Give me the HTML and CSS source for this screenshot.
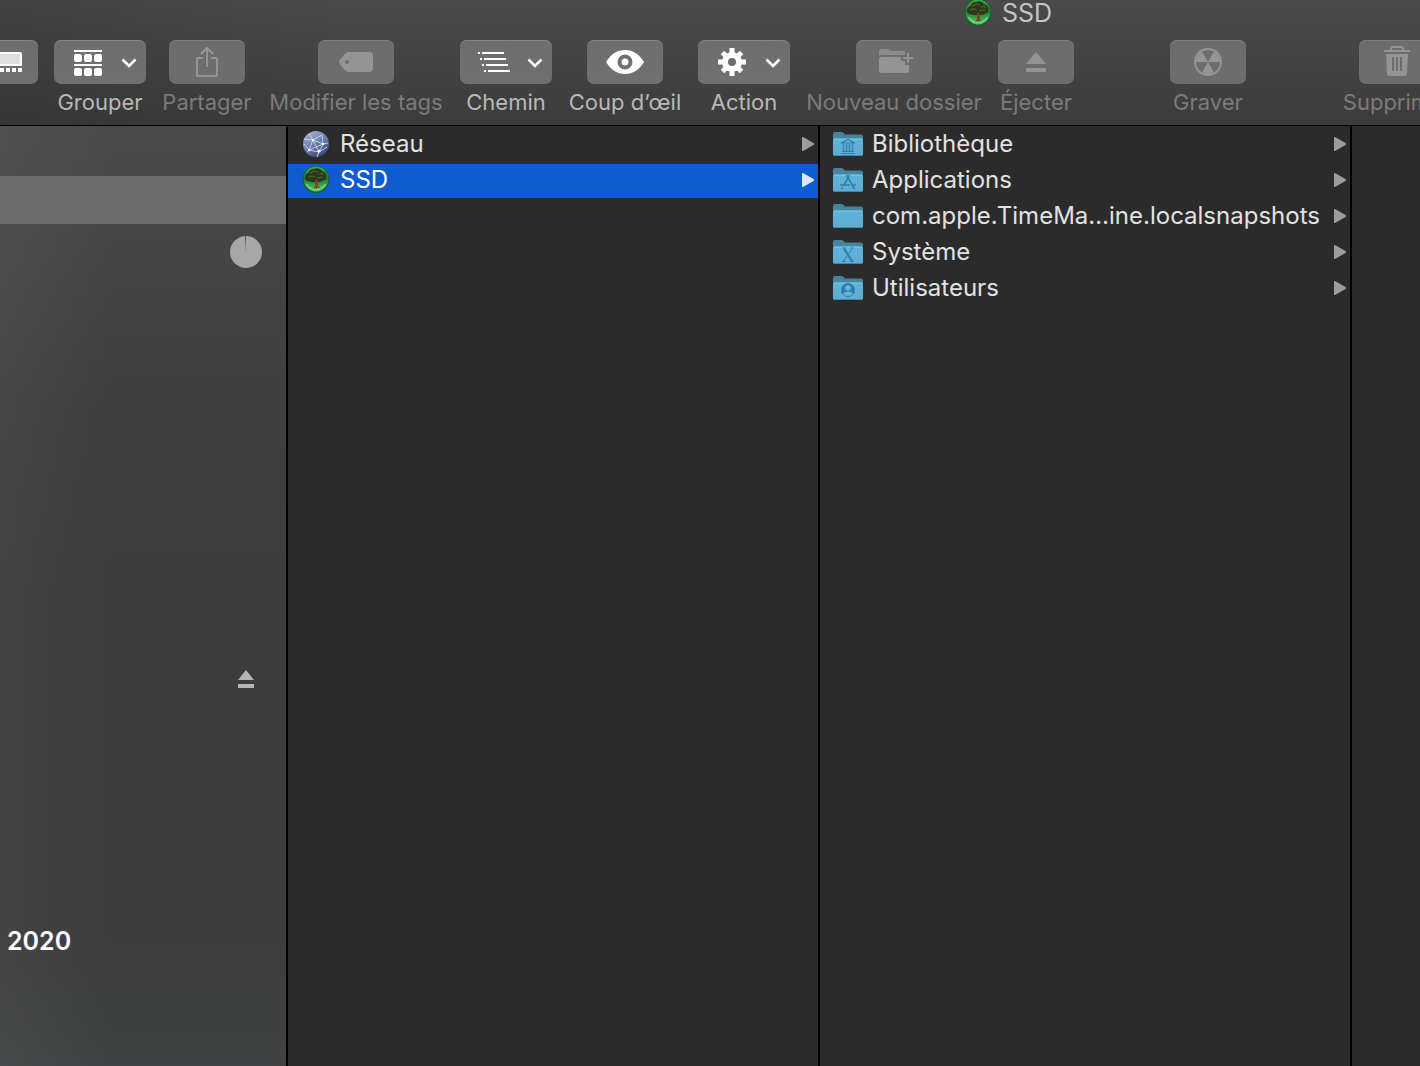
FILE: index.html
```html
<!DOCTYPE html>
<html lang="fr">
<head>
    <meta charset="UTF-8">
    <meta name="viewport" content="width=device-width, initial-scale=1.0">
    <title>SSD</title>
    <link rel="stylesheet" href="styles.css">
</head>
<body>
    <!-- shared symbols -->
    <svg class="defs" aria-hidden="true">
        <defs>
            <linearGradient id="folder-front" x1="0" y1="0" x2="0" y2="1">
                <stop offset="0" stop-color="#5cb3dc"/>
                <stop offset="1" stop-color="#62acd0"/>
            </linearGradient>
            <linearGradient id="tree-glow" x1="0" y1="0" x2="0" y2="1">
                <stop offset="0" stop-color="#2fae4c"/>
                <stop offset="0.5" stop-color="#1d7a35"/>
                <stop offset="1" stop-color="#4fd06c"/>
            </linearGradient>
            <linearGradient id="globe-fill" x1="0" y1="0" x2="0.6" y2="1">
                <stop offset="0" stop-color="#b3bbd3"/>
                <stop offset="0.5" stop-color="#7486b4"/>
                <stop offset="1" stop-color="#3d4c78"/>
            </linearGradient>
            <symbol id="folder" viewBox="0 0 32 28">
                <path d="M1 25V4q0-2 2-2h6q1.500 0 2.500 1l1.500 1.500h16q2 0 2 2V25z" fill="#45849f"/>
                <path d="M1 8h30v1H1z" fill="#31617b"/>
                <path d="M1 9.500q0-1 1-1h28q1 0 1 1V24q0 2-2 2H3q-2 0-2-2z" fill="url(#folder-front)"/>
                <path d="M2 9h28" stroke="#8accE8" stroke-width="1"/>
                <path d="M2 25.500h28" stroke="#3f86ac" stroke-width="1"/>
            </symbol>
            <symbol id="tree" viewBox="0 0 28 28">
                <circle cx="14" cy="13.500" r="13.500" fill="#1c5c2c"/>
                <circle cx="14" cy="13" r="12.500" fill="url(#tree-glow)"/>
                <path d="M4.500 18a11 11 0 0 0 19 0" fill="none" stroke="#7df08e" stroke-width="1.500" opacity="0.7"/>
                <path d="M3 12q0-4 3.500-5 1-4 5.500-4 5-2 8 2 4.500 1 4.500 5.500 0 3.500-3.500 4-3 2.500-7 1-3 1.500-6 0-4 .500-5-3.500z" fill="#2a371c"/>
                <path d="M8 7l4-2 4 1M17 8l3-1 2 2M6 11l4-1 3 1M15 12l4-1 2 1" fill="none" stroke="#4b5a28" stroke-width="1.500"/>
                <path d="M13 14h2.500l.5 6 3 2.500-4-1v2l-1.500-1.500-3 1 2.500-3z" fill="#83402a"/>
            </symbol>
            <symbol id="chevron" viewBox="0 0 16 10">
                <path d="M1.500 1.500l6.500 6.500 6.500-6.500" fill="none" stroke="currentColor" stroke-width="2.600"/>
            </symbol>
            <symbol id="eject" viewBox="0 0 20 20">
                <path d="M10 0l10 12H0zM0 16h20v4H0z" fill="currentColor"/>
            </symbol>
            <symbol id="arrow" viewBox="0 0 12 14">
                <path d="M0 1q0-1.500 1.500-.7l10 5.700q1 1 0 2l-10 5.700Q0 14.500 0 13z" fill="currentColor"/>
            </symbol>
        </defs>
    </svg>

    <div class="window">
        <header class="header">
            <div class="title">
                <svg class="title-icon"><use href="#tree"/></svg>
                <h1>SSD</h1>
            </div>

            <div class="toolbar">
                <div class="tool">
                    <button class="tool-button cut" aria-label="Galerie">
                        <svg width="38" height="44" viewBox="0 0 38 44">
                            <path d="M-10 13h30q1 0 1 1v11H-10z" fill="#dedede" stroke="#fff" stroke-width="2"/>
                            <path d="M0 28h4v4H0zM6 28h4v4H6zM12 28h4v4h-4zM18 28h4v4h-4z" fill="#fff"/>
                        </svg>
                    </button>
                </div>
                <div class="tool">
                    <button class="tool-button menu" id="group">
                        <svg width="28" height="28" viewBox="0 -2 28 28" fill="#fff">
                            <path d="M0 0h28v2H0zM0 14h28v2H0z"/>
                            <rect x="0" y="4" width="8" height="8" rx="2"/>
                            <rect x="10" y="4" width="8" height="8" rx="2"/>
                            <rect x="20" y="4" width="8" height="8" rx="2"/>
                            <rect x="0" y="18" width="8" height="8" rx="2"/>
                            <rect x="10" y="18" width="8" height="8" rx="2"/>
                            <rect x="20" y="18" width="8" height="8" rx="2"/>
                        </svg>
                        <svg class="chevron"><use href="#chevron"/></svg>
                    </button>
                    <label for="group">Grouper</label>
                </div>
                <div class="tool share">
                    <button class="tool-button" id="share" disabled>
                        <svg width="22" height="30" viewBox="0 0 22 30" fill="none" stroke="currentColor" stroke-width="2">
                            <path d="M7 11H2q-1 0-1 1v16q0 1 1 1h18q1 0 1-1V12q0-1-1-1h-5M11 20V1M5 7l6-6 6 6"/>
                        </svg>
                    </button>
                    <label for="share">Partager</label>
                </div>
                <div class="tool wide">
                    <button class="tool-button" id="tags" disabled>
                        <svg width="34" height="20" viewBox="0 0 34 20">
                            <path d="M10 0h20q4 0 4 4v12q0 4-4 4H10Q7 20 4 16L.7 12Q-.5 10 .7 8L4 4Q7 0 10 0zM8 8a2 2 0 1 0 0 4 2 2 0 0 0 0-4z" fill="currentColor"/>
                        </svg>
                    </button>
                    <label for="tags">Modifier les tags</label>
                </div>
                <div class="tool">
                    <button class="tool-button menu path" id="path">
                        <svg width="32" height="20" viewBox="0 0 32 20" fill="#fff">
                            <path d="M0 0h2v2H0zM4 0h22v2H4zM2 6h2v2H2zM6 6h22v2H6zM4 12h2v2H4zM8 12h22v2H8zM6 18h2v2H6zM10 18h22v2H10z"/>
                        </svg>
                        <svg class="chevron"><use href="#chevron"/></svg>
                    </button>
                    <label for="path">Chemin</label>
                </div>
                <div class="tool medium">
                    <button class="tool-button" id="look">
                        <svg width="38" height="24" viewBox="0 0 38 24">
                            <path d="M0 12C5 4 11 0 19 0s14 4 19 12c-5 8-11 12-19 12S5 20 0 12z" fill="#fff"/>
                            <circle cx="19" cy="12" r="5.500" fill="#fff" stroke="#6f6f6f" stroke-width="4"/>
                        </svg>
                    </button>
                    <label for="look">Coup d’œil</label>
                </div>
                <div class="tool">
                    <button class="tool-button menu" id="action">
                        <svg width="28" height="28" viewBox="-14 -14 28 28">
                            <path d="M0-14V14M-14 0H14M-9.500-9.500L9.500 9.500M9.500-9.500L-9.500 9.500" stroke="#fff" stroke-width="5"/>
                            <circle r="7" fill="#6f6f6f" stroke="#fff" stroke-width="6"/>
                            <circle r="3.500" fill="#6f6f6f"/>
                        </svg>
                        <svg class="chevron"><use href="#chevron"/></svg>
                    </button>
                    <label for="action">Action</label>
                </div>
                <div class="tool wide">
                    <button class="tool-button" id="new-folder" disabled>
                        <svg width="38" height="26" viewBox="-4 0 38 26" fill="currentColor">
                            <path d="M0 7V2q0-2 2-2h7l2 2h15v4H4q-3 0-4 1z" opacity="0.8"/>
                            <path d="M0 10q0-2 2-2h20v4h4v4h4v6q0 2-2 2H2q-2 0-2-2z"/>
                            <path d="M24 8h4V4h2v4h4v2h-4v4h-2v-4h-4z"/>
                        </svg>
                    </button>
                    <label for="new-folder">Nouveau dossier</label>
                </div>
                <div class="tool">
                    <button class="tool-button" id="eject-disk" disabled>
                        <svg width="20" height="20"><use href="#eject"/></svg>
                    </button>
                    <label for="eject-disk">Éjecter</label>
                </div>
                <div class="space"></div>
                <div class="tool">
                    <button class="tool-button" id="burn" disabled>
                        <svg width="28" height="28" viewBox="-14 -14 28 28">
                            <circle r="13" fill="none" stroke="currentColor" stroke-width="2"/>
                            <path d="M0 0L-12 0A12 12 0 0 1-6-10.400zM0 0L6-10.400A12 12 0 0 1 12 0zM0 0L6 10.400A12 12 0 0 1-6 10.400z" fill="currentColor"/>
                        </svg>
                    </button>
                    <label for="burn">Graver</label>
                </div>
                <div class="space"></div>
                <div class="tool delete">
                    <button class="tool-button" id="delete" disabled>
                        <svg width="26" height="32" viewBox="0 0 26 32">
                            <path d="M7 5V3q0-2 2-2h8q2 0 2 2v2M0 5h26" fill="none" stroke="currentColor" stroke-width="2"/>
                            <path d="M2 8h22l-1 19q0 3-3 3H6q-3 0-3-3zM8 11v14h2V11zM12 11v14h2V11zM16 11v14h2V11z" fill="currentColor" fill-rule="evenodd"/>
                        </svg>
                    </button>
                    <label for="delete">Supprimer</label>
                </div>
            </div>
        </header>

        <main class="content">
            <aside class="sidebar">
                <div class="side-row selected"></div>
                <div class="side-row">
                    <svg class="pie" viewBox="0 0 32 32">
                        <circle cx="16" cy="16" r="16" fill="#a7a7a7"/>
                        <path d="M15 0h1v16z" fill="#505050"/>
                    </svg>
                </div>
                <div class="side-row volume">
                    <button class="side-eject" aria-label="Éjecter le volume">
                        <svg width="16" height="18" viewBox="0 0 16 18">
                            <path d="M8 0l8 10H0zM0 14h16v4H0z" fill="currentColor"/>
                        </svg>
                    </button>
                </div>
                <div class="side-row year">2020</div>
            </aside>

            <ul class="column">
                <li class="row">
                    <svg class="row-icon" viewBox="0 0 32 28">
                        <circle cx="16" cy="14" r="13" fill="url(#globe-fill)"/>
                        <path d="M4 9l9 1 9-5M13 10l6 12M13 10L9 20l10 2 8-5M22 5l1 9-4 8M4 14l5 6 14-6 5-1M9 4l4 6 10 4M7 22l2-2M19 22l-2 5" fill="none" stroke="#d8e2f8" stroke-width="0.800"/>
                        <g fill="#fff">
                            <circle cx="13" cy="10" r="1.200"/>
                            <circle cx="19" cy="21" r="1.600"/>
                            <circle cx="23" cy="14" r="1.200"/>
                            <circle cx="9" cy="20" r="1.200"/>
                        </g>
                    </svg>
                    <span class="name">Réseau</span>
                    <svg class="arrow"><use href="#arrow"/></svg>
                </li>
                <li class="row selected">
                    <svg class="row-icon"><use href="#tree"/></svg>
                    <span class="name">SSD</span>
                    <svg class="arrow"><use href="#arrow"/></svg>
                </li>
            </ul>

            <ul class="column">
                <li class="row">
                    <svg class="row-icon" viewBox="0 0 32 28">
                        <use href="#folder"/>
                        <path d="M9 13l7-3.500 7 3.500zM9 23.500h14M10 21.500h12M11.500 14v7M14.500 14v7M17.500 14v7M20.500 14v7" fill="none" stroke="#2f7fae" stroke-width="1.200"/>
                    </svg>
                    <span class="name">Bibliothèque</span>
                    <svg class="arrow"><use href="#arrow"/></svg>
                </li>
                <li class="row">
                    <svg class="row-icon" viewBox="0 0 32 28">
                        <use href="#folder"/>
                        <path d="M17.500 9l-6 11M10.500 21.500L9.500 23M14.500 9l8 14M8 19h10M21 19h3" fill="none" stroke="#2f7fae" stroke-width="1.600"/>
                    </svg>
                    <span class="name">Applications</span>
                    <svg class="arrow"><use href="#arrow"/></svg>
                </li>
                <li class="row">
                    <svg class="row-icon"><use href="#folder"/></svg>
                    <span class="name">com.apple.TimeMa…ine.localsnapshots</span>
                    <svg class="arrow"><use href="#arrow"/></svg>
                </li>
                <li class="row">
                    <svg class="row-icon" viewBox="0 0 32 28">
                        <use href="#folder"/>
                        <path d="M12 10.500l8 12.500" stroke="#2f7fae" stroke-width="2.200"/>
                        <path d="M20.500 10.500L11.500 23M10.500 10h4M18.500 10h3.500M10 23.500h4M18 23.500h4" stroke="#2f7fae" stroke-width="1"/>
                    </svg>
                    <span class="name">Système</span>
                    <svg class="arrow"><use href="#arrow"/></svg>
                </li>
                <li class="row">
                    <svg class="row-icon" viewBox="0 0 32 28">
                        <use href="#folder"/>
                        <circle cx="16" cy="16" r="7" fill="#2f7fae"/>
                        <circle cx="16" cy="14" r="2.800" fill="#64b3da"/>
                        <path d="M11 20q1-2.500 5-2.500t5 2.500q-2 2-5 2t-5-2z" fill="#64b3da"/>
                    </svg>
                    <span class="name">Utilisateurs</span>
                    <svg class="arrow"><use href="#arrow"/></svg>
                </li>
            </ul>

            <div class="column-rest"></div>
        </main>
    </div>
</body>
</html>
```
FILE: styles.css
```css
* {
    margin: 0;
    padding: 0;
    box-sizing: border-box;
    font-family: Inter, 'Liberation Sans', sans-serif;
}

body {
    background-color: #2b2b2b;
    overflow: hidden;
}

svg {
    display: block;
    flex-shrink: 0;
}

.defs {
    position: absolute;
    width: 0;
    height: 0;
}

.window {
    display: flex;
    flex-direction: column;
    height: 100vh;
}

/* header */
.header {
    background: linear-gradient(90deg, rgba(0, 0, 0, 0.1), transparent 25%), linear-gradient(#4a4a4a, #3c3c3c);
    border-bottom: 1px solid #000;
    height: 126px;
    flex-shrink: 0;
    overflow: hidden;
}

.title {
    display: flex;
    align-items: center;
    gap: 10px;
    height: 40px;
    padding: 0 0 14px 964px;
}

.title-icon {
    width: 28px;
    height: 28px;
}

.title h1 {
    font-size: 25px;
    line-height: 26px;
    font-weight: 400;
    color: #c4c4c4;
}

.toolbar {
    display: flex;
    align-items: flex-start;
    gap: 16px;
}

.tool {
    display: flex;
    flex-direction: column;
    align-items: center;
    flex-shrink: 0;
    gap: 4px;
}

.tool.share {
    width: 90px;
}

.tool.delete {
    width: 110px;
}

.tool.medium {
    width: 114px;
}

.tool.wide {
    width: 176px;
}

.space {
    width: 64px;
    flex-shrink: 0;
}

.tool-button {
    display: flex;
    align-items: center;
    justify-content: center;
    width: 76px;
    height: 44px;
    border: none;
    border-radius: 7px;
    background: linear-gradient(#6e6e6e, #707070);
    box-shadow: inset 0 1px 0 #858585;
    color: #fff;
}

.tool-button.menu {
    width: 92px;
    padding: 0 9px 0 20px;
    justify-content: space-between;
}

.tool-button.path {
    padding-left: 18px;
}

.tool-button.cut {
    width: 38px;
    border-radius: 0 7px 7px 0;
}

.tool-button:disabled {
    background: #6d6d6d;
    box-shadow: inset 0 1px 0 #7e7e7e;
    color: #949494;
}

.chevron {
    width: 16px;
    height: 10px;
    margin-top: 2px;
}

.tool label {
    font-size: 22px;
    line-height: 28px;
    white-space: nowrap;
    color: #b8b8b8;
}

.tool-button:disabled + label {
    color: #7b7b7b;
}

/* sidebar */
.content {
    display: flex;
    flex: 1;
    min-height: 0;
}

.sidebar {
    width: 288px;
    flex-shrink: 0;
    padding-top: 50px;
    border-right: 2px solid #000;
    background: linear-gradient(90deg, rgba(255, 255, 255, 0.04), transparent 40%), linear-gradient(#4a4a4a, #3f3f3f 30%, #3c3c3c 50%, #3c3c3c 85%, #404243);
}

.side-row {
    display: flex;
    align-items: center;
    justify-content: flex-end;
    height: 56px;
    padding-right: 24px;
}

.side-row.selected {
    height: 48px;
    background-color: #6c6c6c;
}

.side-row.volume {
    margin-top: 371px;
    padding-right: 32px;
}

.side-row.year {
    justify-content: flex-start;
    margin-top: 206px;
    padding-left: 7px;
    font-size: 25px;
    font-weight: 600;
    color: #fff;
}

.pie {
    width: 32px;
    height: 32px;
}

.side-eject {
    border: none;
    background: none;
    color: #b5b5b5;
}

/* columns */
.column {
    display: flex;
    flex-direction: column;
    gap: 2px;
    width: 532px;
    flex-shrink: 0;
    padding-top: 2px;
    border-right: 2px solid #000;
    list-style: none;
}

.column-rest {
    flex: 1;
}

.row {
    display: flex;
    align-items: center;
    gap: 8px;
    height: 34px;
    padding: 0 4px 2px 12px;
    color: #e2e2e2;
}

.row.selected {
    background-color: #0f5bd0;
    color: #fff;
}

.row-icon {
    width: 32px;
    height: 28px;
}

.name {
    flex: 1;
    min-width: 0;
    font-size: 24px;
    line-height: 30px;
    font-weight: 400;
    white-space: nowrap;
}

.arrow {
    width: 12px;
    height: 14px;
    color: #9d9d9d;
}

.row.selected .arrow {
    color: #dde6f8;
}
```
